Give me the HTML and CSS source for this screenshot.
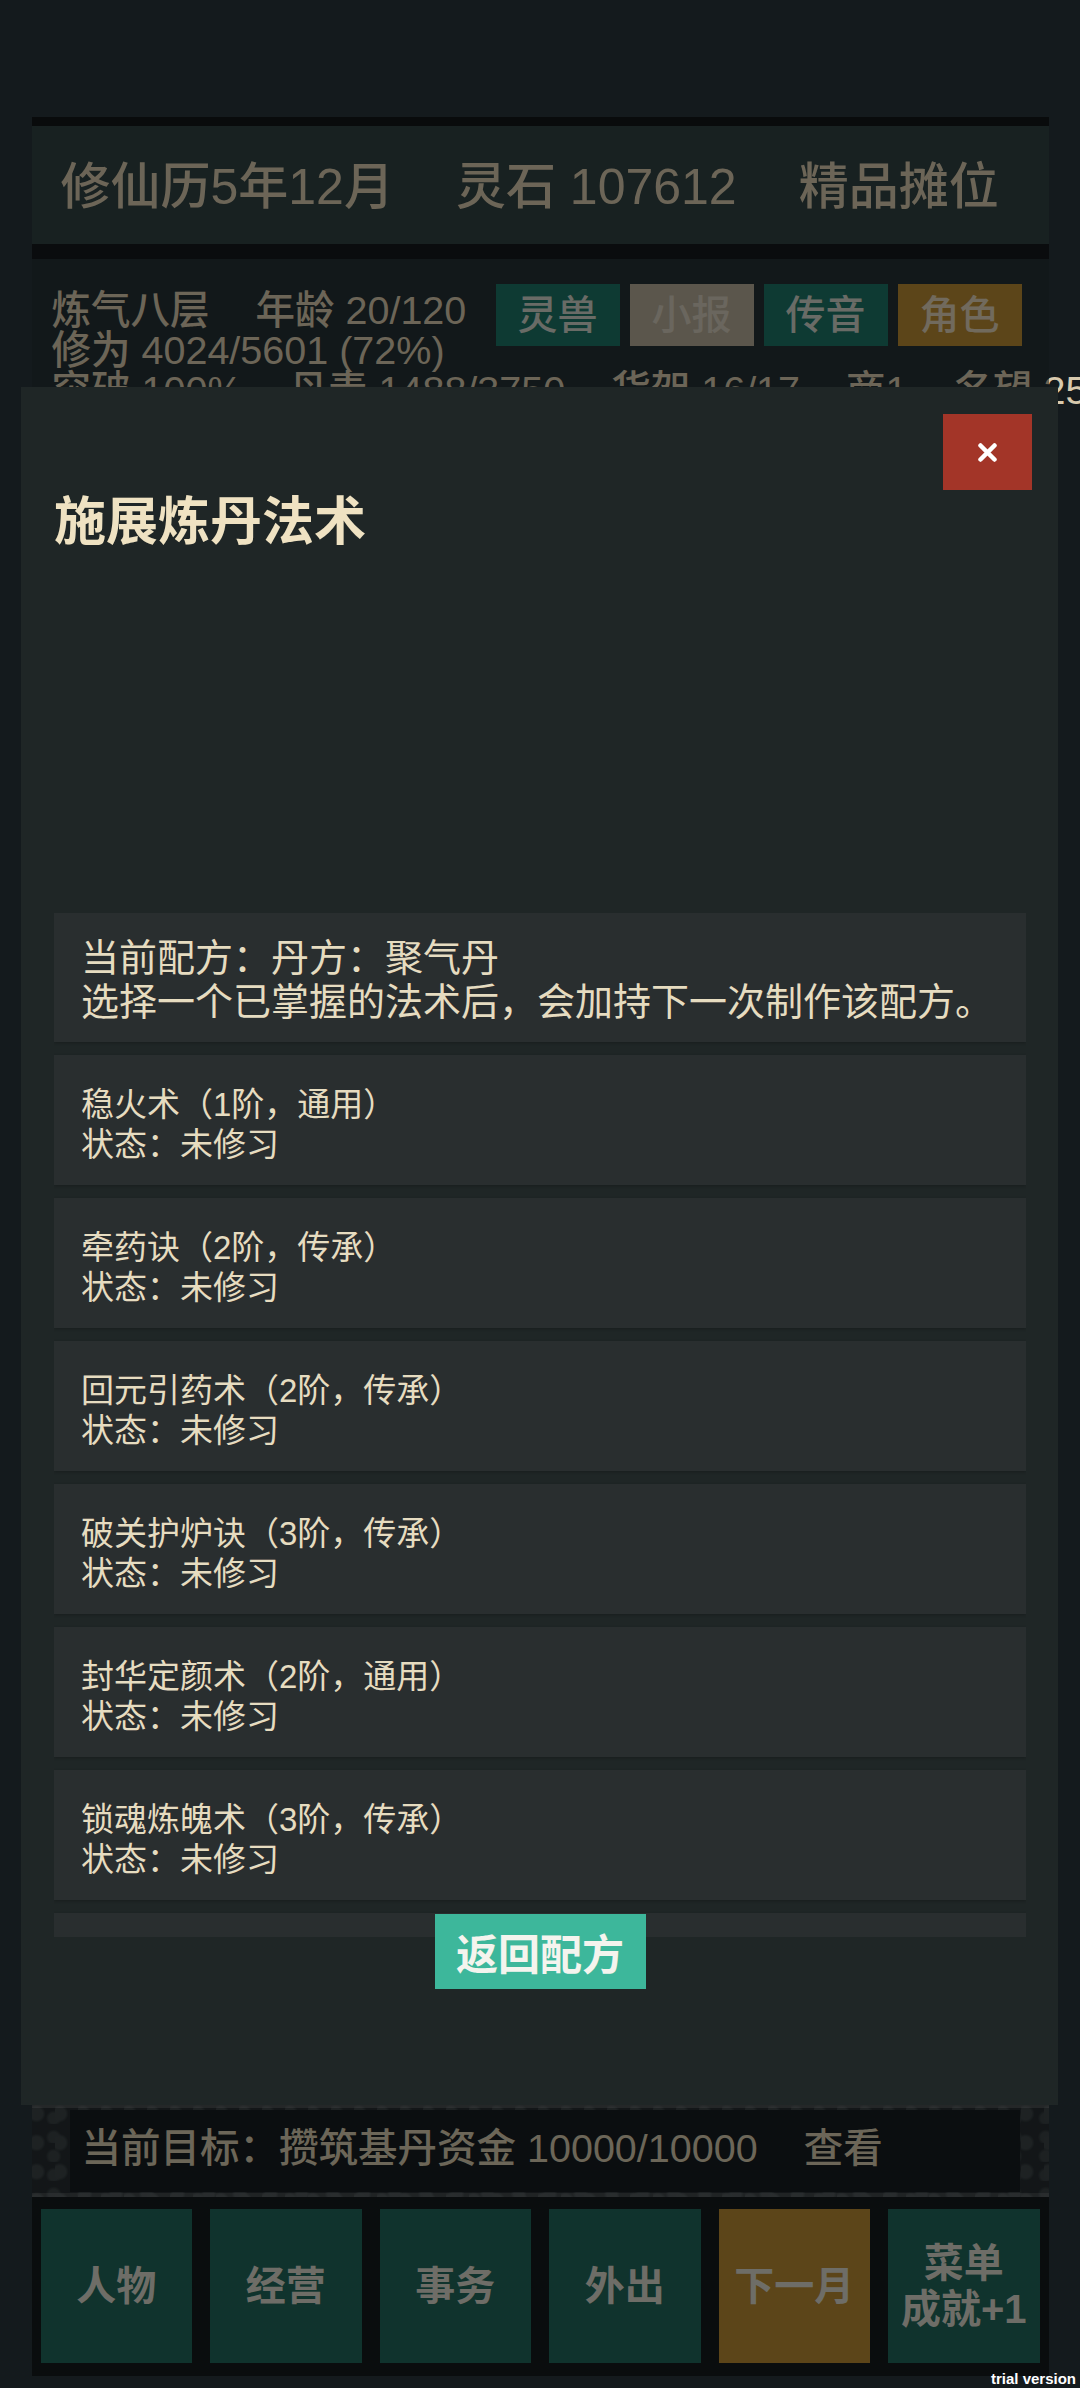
FILE: index.html
```html
<!doctype html>
<html>
<head>
<meta charset="UTF-8">
<title>施展炼丹法术</title>
<link rel="stylesheet" href="styles.css">
</head>
<body>
<div class="app">
	<div class="topbar">
		<span>修仙历5年12月</span>
		<span>灵石 107612</span>
		<span>精品摊位</span>
	</div>
	<div class="main">
		<div class="stats-row">
			<div class="stats-text">
				<div class="line"><span>炼气八层</span><span>年龄 20/120</span></div>
				<div class="line"><span>修为 4024/5601 (72%)</span></div>
			</div>
			<div class="tabs">
				<div class="tab">灵兽</div>
				<div class="tab gray">小报</div>
				<div class="tab">传音</div>
				<div class="tab gold">角色</div>
			</div>
		</div>
		<div class="line"><span>突破 100%</span><span>丹毒 1488/3750</span><span>货架 16/17</span><span>商1</span><span>名望 2580</span></div>
	</div>
	<div class="goal">
		<div class="goal-in">当前目标：攒筑基丹资金 10000/10000<span>查看</span></div>
	</div>
	<div class="nav">
		<div class="nav-btn">人物</div>
		<div class="nav-btn">经营</div>
		<div class="nav-btn">事务</div>
		<div class="nav-btn">外出</div>
		<div class="nav-btn gold">下一月</div>
		<div class="nav-btn">菜单<br>成就+1</div>
	</div>
</div>

<div class="modal">
	<div class="modal-head">
		<button class="close"><svg width="19" height="19" viewBox="0 0 19 19"><path d="M2.5 2.5L16.5 16.5M16.5 2.5L2.5 16.5" stroke="#fff" stroke-width="4.5" stroke-linecap="round"/></svg></button>
	</div>
	<h2 class="modal-title">施展炼丹法术</h2>
	<div class="recipe-list">
		<div class="card info">当前配方：丹方：聚气丹<br>选择一个已掌握的法术后，会加持下一次制作该配方。</div>
		<div class="card">稳火术（1阶，通用）<br>状态：未修习</div>
		<div class="card">牵药诀（2阶，传承）<br>状态：未修习</div>
		<div class="card">回元引药术（2阶，传承）<br>状态：未修习</div>
		<div class="card">破关护炉诀（3阶，传承）<br>状态：未修习</div>
		<div class="card">封华定颜术（2阶，通用）<br>状态：未修习</div>
		<div class="card">锁魂炼魄术（3阶，传承）<br>状态：未修习</div>
		<div class="card">凝元聚华术（3阶，传承）<br>状态：未修习</div>
	</div>
	<div class="modal-foot"><button class="back">返回配方</button></div>
</div>

<div class="trial">trial version</div>
</body>
</html>
```

FILE: styles.css
```css
*{ margin:0; padding:0; box-sizing:border-box; }
html,body{ overflow:hidden; }
body{ background:#141a1d; padding:117px 0 12px; font-family:"Liberation Sans","Noto Sans CJK SC",sans-serif; }
button{ font:inherit; border:0; cursor:pointer; }

/* page behind the dialog, dimmed by the backdrop */
.app{ position:relative; width:1017px; height:2259px; margin:0 auto; display:flex; flex-direction:column; }
.app::after{ content:''; position:absolute; left:0; top:0; right:0; bottom:0; background:rgba(0,0,0,0.5); }

.topbar{ height:142px; border-top:9px solid #121618; border-bottom:15px solid #14181c; background:#304242; padding:31px 0 0 29px; display:flex; gap:62px; font-size:50px; line-height:60px; font-weight:500; color:#d8caae; white-space:nowrap; }

.main{ flex:1; background:#243034; padding:31px 27px 0 20px; color:#d8caae; font-size:39.5px; line-height:40px; font-weight:500; }
.stats-row{ display:flex; justify-content:space-between; }
.line{ display:flex; gap:46px; white-space:nowrap; }
.tabs{ display:flex; gap:10px; margin-top:-6px; }
.tab{ width:124px; height:62px; display:flex; align-items:center; justify-content:center; font-size:40px; background:#1c7466; color:#d2d6cc; }
.tab.gray{ background:#b6ac98; color:#d4ccbc; }
.tab.gold{ background:#b88a32; color:#e2d4ba; }

.goal{ height:92px; padding:5px 29px 5px 38px; background:linear-gradient(180deg,rgba(255,255,255,0.16) 0 3px,transparent 3px calc(100% - 4px),rgba(255,255,255,0.12) calc(100% - 4px)),radial-gradient(circle at 20% 30%,#3c4447 0 6px,transparent 9px),radial-gradient(circle at 70% 70%,#3a4245 0 5px,transparent 8px),#262d30; background-size:100% 100%,23px 29px,31px 19px,auto; }
.goal-in{ height:82px; background:#161c20; padding:16px 0 0 12px; font-size:39.5px; line-height:44px; font-weight:500; color:#d8ccb0; white-space:nowrap; }
.goal-in span{ margin-left:46px; }

.nav{ height:179px; background:#141a1c; padding:12px 9px 13px; display:grid; grid-template-columns:repeat(6,1fr); gap:18px; }
.nav-btn{ background:#20665a; color:#dcdace; font-size:40px; font-weight:bold; line-height:46px; display:flex; align-items:center; justify-content:center; text-align:center; }
.nav-btn.gold{ background:#b88a32; }

/* dialog */
.modal{ position:absolute; left:21px; top:387px; width:1037px; height:1718px; z-index:2; background:#1f2626; padding:27px 32px 0 33px; }
.modal-head{ display:flex; justify-content:flex-end; }
.close{ width:89px; height:76px; margin-right:-6px; background:#a33528; display:flex; align-items:center; justify-content:center; }
.modal-title{ margin-top:2px; font-size:52px; line-height:60px; font-weight:bold; color:#efe2c2; }
.recipe-list{ margin-top:361px; height:1024px; overflow:hidden; }
.card{ background:#292e2f; padding:30px 27px 20px; font-size:33px; line-height:40px; color:#e6dcc0; box-shadow:0 1px 3px rgba(0,0,0,0.25); }
.card + .card{ margin-top:13px; }
.card.info{ padding:23px 27px 18px; font-size:38px; line-height:44px; }
.modal-foot{ position:relative; display:flex; justify-content:center; margin-top:-23px; }
.back{ width:211px; height:75px; background:#3db79b; color:#f4f4ee; font-size:42px; font-weight:bold; }

.trial{ position:absolute; right:4px; bottom:1px; z-index:3; font:bold 15px/17px "Liberation Sans Narrow","Liberation Sans",sans-serif; color:#fff; }
```
